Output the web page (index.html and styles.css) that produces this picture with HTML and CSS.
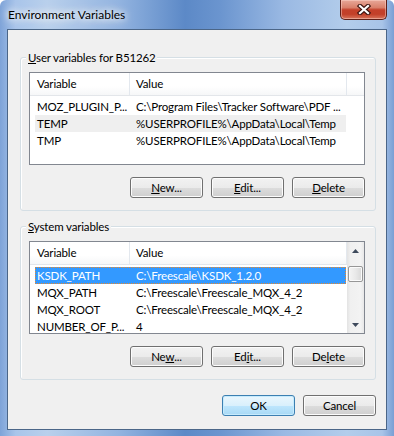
FILE: index.html
```html
<!DOCTYPE html>
<html lang="en">
<head>
    <meta charset="UTF-8">
    <meta name="viewport" content="width=device-width, initial-scale=1.0">
    <title>Environment Variables</title>
    <link rel="stylesheet" href="styles.css">
</head>
<body>
    <div class="window">
        <div class="titlebar">
            <span class="title">Environment Variables</span>
            <button class="close-btn" aria-label="Close">
                <svg width="14" height="11" viewBox="0 0 14 11">
                    <path d="M3 2 L11 9 M11 2 L3 9" stroke="#3d1410" stroke-width="4.4" stroke-linecap="square"/>
                    <path d="M3 2 L11 9 M11 2 L3 9" stroke="#ffffff" stroke-width="2.2" stroke-linecap="square"/>
                </svg>
            </button>
        </div>

        <div class="client">
            <!-- user variables -->
            <div class="group">
                <div class="group-title"><span><u>U</u>ser variables for B51262</span></div>
                <div class="listbox">
                    <div class="lv-main">
                        <div class="lv-header">
                            <div class="hcol hcol-name">Variable</div>
                            <div class="hcol hcol-value">Value</div>
                            <div class="hcol hcol-fill"></div>
                        </div>
                        <div class="lv-rows">
                            <div class="lv-row"><span class="cell-name">MOZ_PLUGIN_P...</span><span class="cell-value">C:\Program Files\Tracker Software\PDF ...</span></div>
                            <div class="lv-row hot"><span class="cell-name">TEMP</span><span class="cell-value">%USERPROFILE%\AppData\Local\Temp</span></div>
                            <div class="lv-row"><span class="cell-name">TMP</span><span class="cell-value">%USERPROFILE%\AppData\Local\Temp</span></div>
                        </div>
                    </div>
                </div>
                <div class="button-row">
                    <button class="btn"><u>N</u>ew...</button>
                    <button class="btn"><u>E</u>dit...</button>
                    <button class="btn"><u>D</u>elete</button>
                </div>
            </div>

            <!-- system variables -->
            <div class="group group-system">
                <div class="group-title"><span><u>S</u>ystem variables</span></div>
                <div class="listbox">
                    <div class="lv-main">
                        <div class="lv-header">
                            <div class="hcol hcol-name">Variable</div>
                            <div class="hcol hcol-value">Value</div>
                        </div>
                        <div class="lv-rows">
                            <div class="lv-row selected"><span class="cell-name">KSDK_PATH</span><span class="cell-value">C:\Freescale\KSDK_1.2.0</span></div>
                            <div class="lv-row"><span class="cell-name">MQX_PATH</span><span class="cell-value">C:\Freescale\Freescale_MQX_4_2</span></div>
                            <div class="lv-row"><span class="cell-name">MQX_ROOT</span><span class="cell-value">C:\Freescale\Freescale_MQX_4_2</span></div>
                            <div class="lv-row"><span class="cell-name">NUMBER_OF_P...</span><span class="cell-value">4</span></div>
                        </div>
                    </div>
                    <div class="scrollbar">
                        <div class="sb-arrow">
                            <svg width="7" height="4" viewBox="0 0 7 4"><polygon points="0,4 7,4 3.5,0" fill="#3e4a5c"/></svg>
                        </div>
                        <div class="sb-track">
                            <div class="sb-thumb"></div>
                        </div>
                        <div class="sb-arrow">
                            <svg width="7" height="4" viewBox="0 0 7 4"><polygon points="0,0 7,0 3.5,4" fill="#3e4a5c"/></svg>
                        </div>
                    </div>
                </div>
                <div class="button-row">
                    <button class="btn">Ne<u>w</u>...</button>
                    <button class="btn">Ed<u>i</u>t...</button>
                    <button class="btn">De<u>l</u>ete</button>
                </div>
            </div>

            <div class="dialog-buttons">
                <button class="btn btn-default">OK</button>
                <button class="btn">Cancel</button>
            </div>
        </div>
    </div>
</body>
</html>
```

FILE: styles.css
```css
body {
    margin: 0;
    padding: 0;
    background: #ffffff;
    font-family: Lato, "Liberation Sans", sans-serif;
    font-size: 11.5px;
    letter-spacing: -0.15px;
    color: #000;
}

.window {
    width: 394px;
    height: 436px;
    box-sizing: border-box;
    border-radius: 6px 6px 0 0;
    background: linear-gradient(to right, #7ea3d8 0%, #a9c5ea 4%, #b9d0ec 12%, #93b4e0 30%, #5c89c7 47%, #6b95cf 56%, #9ab9e3 72%, #b3cdeb 88%, #a8c4e8 97%, #7a9fd4 100%);
    display: flex;
    flex-direction: column;
}

/* title bar */
.titlebar {
    height: 29px;
    display: flex;
    justify-content: space-between;
    align-items: flex-start;
    padding-left: 8px;
    padding-right: 7px;
}

.title {
    margin-top: 7px;
    line-height: 16px;
    font-size: 12px;
    letter-spacing: 0;
    color: #000;
    text-shadow: 0 0 6px #fff, 0 0 10px #fff, 0 0 14px rgba(255, 255, 255, 0.9);
}

.close-btn {
    width: 47px;
    height: 20px;
    padding: 0;
    border: 1px solid #5e2019;
    border-top: none;
    border-radius: 0 0 5px 5px;
    background: linear-gradient(#e8a899 0%, #d9806b 40%, #c4402a 52%, #c24029 75%, #d8755c 100%);
    box-shadow: inset 0 0 0 1px rgba(255, 220, 210, 0.45);
    display: flex;
    align-items: center;
    justify-content: center;
}

.close-btn svg {
    display: block;
    margin-top: -1px;
}

/* client area */
.client {
    margin: 0 7px;
    height: 401px;
    box-sizing: border-box;
    border: 1px solid #4b6688;
    background: #f0f0f0;
    padding: 27px 10px 13px 12px;
}

.group {
    width: 356px;
    height: 154px;
    box-sizing: border-box;
    border: 1px solid #d5dfe5;
    border-radius: 3px;
    padding: 0 10px 0 8px;
    box-shadow: inset 1px 1px 0 #fff;
}

.group-system {
    margin-top: 15px;
}

.group-title {
    margin-top: -8px;
    height: 15px;
    line-height: 15px;
}

.group-title span {
    display: inline-block;
    margin-left: -3px;
    padding: 0 2px;
    background: #f0f0f0;
}

/* list view */
.listbox {
    margin-top: 7px;
    height: 93px;
    box-sizing: border-box;
    border: 1px solid #828790;
    background: #fff;
    display: flex;
    overflow: hidden;
}

.lv-main {
    flex: 1;
}

.lv-header {
    display: flex;
    height: 23px;
    box-sizing: border-box;
    background: linear-gradient(#ffffff 0%, #ffffff 60%, #f6f7f8 100%);
    border-bottom: 1px solid #e3e6ea;
}

.hcol {
    line-height: 22px;
    box-sizing: border-box;
    border-right: 1px solid #e3e8ee;
}

.hcol-name {
    width: 100px;
    padding-left: 7px;
}

.hcol-value {
    width: 217px;
    padding-left: 6px;
}

.hcol-fill {
    flex: 1;
    border-right: none;
}

.lv-rows {
    padding: 2px 0 0 5px;
}

.lv-row {
    display: flex;
    width: 311px;
    height: 17px;
    line-height: 17px;
    white-space: nowrap;
}

.cell-name {
    width: 95px;
    padding-left: 2px;
    box-sizing: border-box;
}

.cell-value {
    padding-left: 6px;
}

.lv-row.hot {
    background: #efefef;
}

.lv-row.selected {
    background: #3399ff;
    color: #fff;
    outline: 1px dotted #e8892d;
    outline-offset: -1px;
}

/* scroll bar */
.scrollbar {
    width: 17px;
    display: flex;
    flex-direction: column;
    background: linear-gradient(to right, #e3e3e3 0%, #f0f0f0 20%, #f3f3f3 80%, #e8e8e8 100%);
}

.sb-arrow {
    height: 17px;
    display: flex;
    align-items: center;
    justify-content: center;
}

.sb-arrow svg {
    display: block;
}

.sb-track {
    flex: 1;
    padding-top: 7px;
}

.sb-thumb {
    margin-left: 1px;
    width: 15px;
    height: 16px;
    box-sizing: border-box;
    border: 1px solid #979797;
    border-radius: 2px;
    background: linear-gradient(to right, #f4f4f4 0%, #e9e9e9 50%, #d8d8d8 100%);
    box-shadow: inset 0 0 0 1px #fbfbfb;
}

/* buttons */
.button-row,
.dialog-buttons {
    display: flex;
    justify-content: flex-end;
    gap: 8px;
}

.button-row {
    margin-top: 12px;
}

.dialog-buttons {
    margin-top: 15px;
}

.btn {
    width: 73px;
    height: 21px;
    padding: 0;
    border: 1px solid #707070;
    border-radius: 3px;
    background: linear-gradient(#f2f2f2 0%, #ebebeb 50%, #dddddd 51%, #cfcfcf 100%);
    box-shadow: inset 0 0 0 1px #fcfcfc;
    font-family: Lato, "Liberation Sans", sans-serif;
    font-size: 11.5px;
    letter-spacing: -0.15px;
    color: #000;
    line-height: 18px;
}

.btn-default {
    border-color: #3c7fb1;
    background: linear-gradient(#eaf6fd 0%, #d9f0fc 50%, #bee6fd 51%, #a7d9f5 100%);
    box-shadow: inset 0 0 0 1px #c6ebfd;
}
```
